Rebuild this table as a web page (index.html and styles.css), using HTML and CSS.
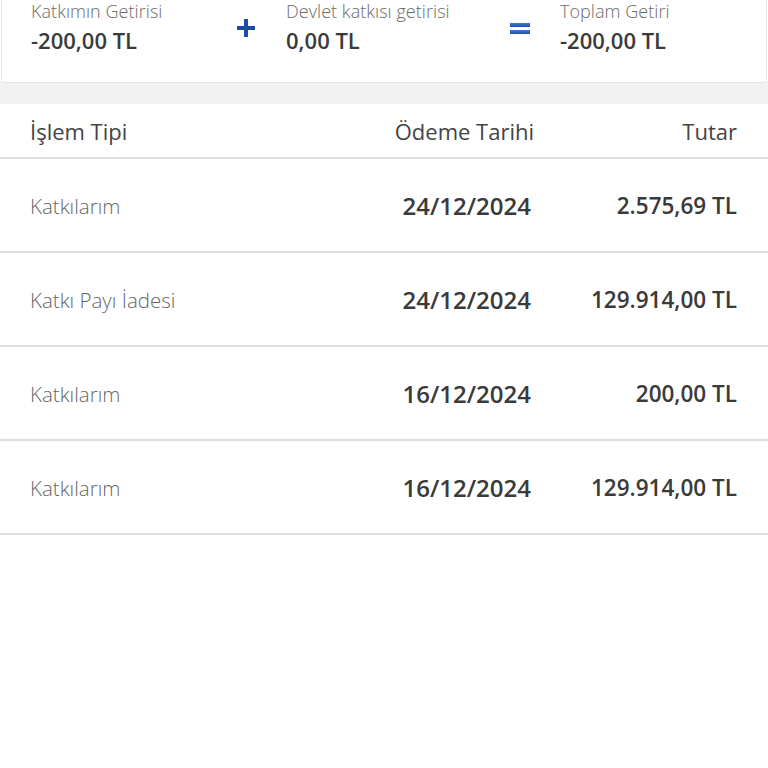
FILE: index.html
```html
<!DOCTYPE html>
<html lang="tr">
<head>
<meta charset="utf-8">
<link rel="stylesheet" href="styles.css">
</head>
<body>
<section class="summary">
  <div class="item item-1">
    <div class="label">Katkımın Getirisi</div>
    <div class="value">-200,00 TL</div>
  </div>
  <div class="op">
    <svg width="20" height="20" viewBox="0 0 20 20"><rect x="8" y="1" width="4" height="18" fill="#1c4da1"/><rect x="1" y="8" width="18" height="4" fill="#1c4da1"/></svg>
  </div>
  <div class="item item-2">
    <div class="label">Devlet katkısı getirisi</div>
    <div class="value">0,00 TL</div>
  </div>
  <div class="op">
    <svg width="20" height="14" viewBox="0 0 20 14"><defs><linearGradient id="g" x1="0" y1="0" x2="0" y2="1"><stop offset="0" stop-color="#3d7fd6"/><stop offset="1" stop-color="#1c4da1"/></linearGradient></defs><rect x="0" y="2" width="20" height="4" fill="url(#g)"/><rect x="0" y="9" width="20" height="4" fill="url(#g)"/></svg>
  </div>
  <div class="item">
    <div class="label">Toplam Getiri</div>
    <div class="value">-200,00 TL</div>
  </div>
</section>
<div class="gap"></div>
<section class="table">
  <div class="row head">
    <div class="c1">İşlem Tipi</div>
    <div class="c2">Ödeme Tarihi</div>
    <div class="c3">Tutar</div>
  </div>
  <div class="row">
    <div class="c1 type">Katkılarım</div>
    <div class="c2 date">24/12/2024</div>
    <div class="c3 amt">2.575,69 TL</div>
  </div>
  <div class="row">
    <div class="c1 type">Katkı Payı İadesi</div>
    <div class="c2 date">24/12/2024</div>
    <div class="c3 amt">129.914,00 TL</div>
  </div>
  <div class="row">
    <div class="c1 type">Katkılarım</div>
    <div class="c2 date">16/12/2024</div>
    <div class="c3 amt">200,00 TL</div>
  </div>
  <div class="row">
    <div class="c1 type">Katkılarım</div>
    <div class="c2 date">16/12/2024</div>
    <div class="c3 amt">129.914,00 TL</div>
  </div>
</section>
</body>
</html>
```
FILE: styles.css
```css
* { box-sizing: border-box; }
body {
  margin: 0;
  background: #fff;
  font-family: "Open Sans", "Lato", sans-serif;
  color: #333;
}
.summary {
  margin: 0 1px;
  height: 83px;
  background: #fff;
  border: 1px solid #e6e6e6;
  border-top: none;
  display: flex;
  align-items: flex-start;
  padding-left: 29px;
}
.item-1 { width: 200px; }
.item-2 { width: 219px; }
.label {
  font-size: 18px;
  font-weight: 300;
  color: #6b6b6b;
  line-height: 23px;
  letter-spacing: 0.05px;
}
.value {
  font-size: 22px;
  font-weight: 600;
  color: #3a3a3a;
  line-height: 34px;
}
.op {
  width: 30px;
  margin-right: 25px;
  height: 55px;
  display: flex;
  align-items: center;
  justify-content: center;
}
.gap {
  height: 21px;
  background: #f2f2f2;
}
.row {
  display: grid;
  grid-template-columns: 1fr 180px 206px;
  align-items: center;
  padding: 0 31px 0 30px;
  height: 94px;
  border-bottom: 2px solid #dcdcdc;
}
.row.head {
  height: 55px;
  font-size: 22px;
  font-weight: 400;
  color: #444;
}
.c2, .c3 { text-align: right; }
.head .c2 { margin-right: -3px; }
.type {
  font-size: 20.5px;
  font-weight: 300;
  color: #666;
  padding-top: 2px;
}
.date {
  font-size: 24px;
  font-weight: 600;
  color: #3a3a3a;
}
.amt {
  font-size: 22.5px;
  font-weight: 600;
  color: #3a3a3a;
  padding-top: 1px;
}
```
